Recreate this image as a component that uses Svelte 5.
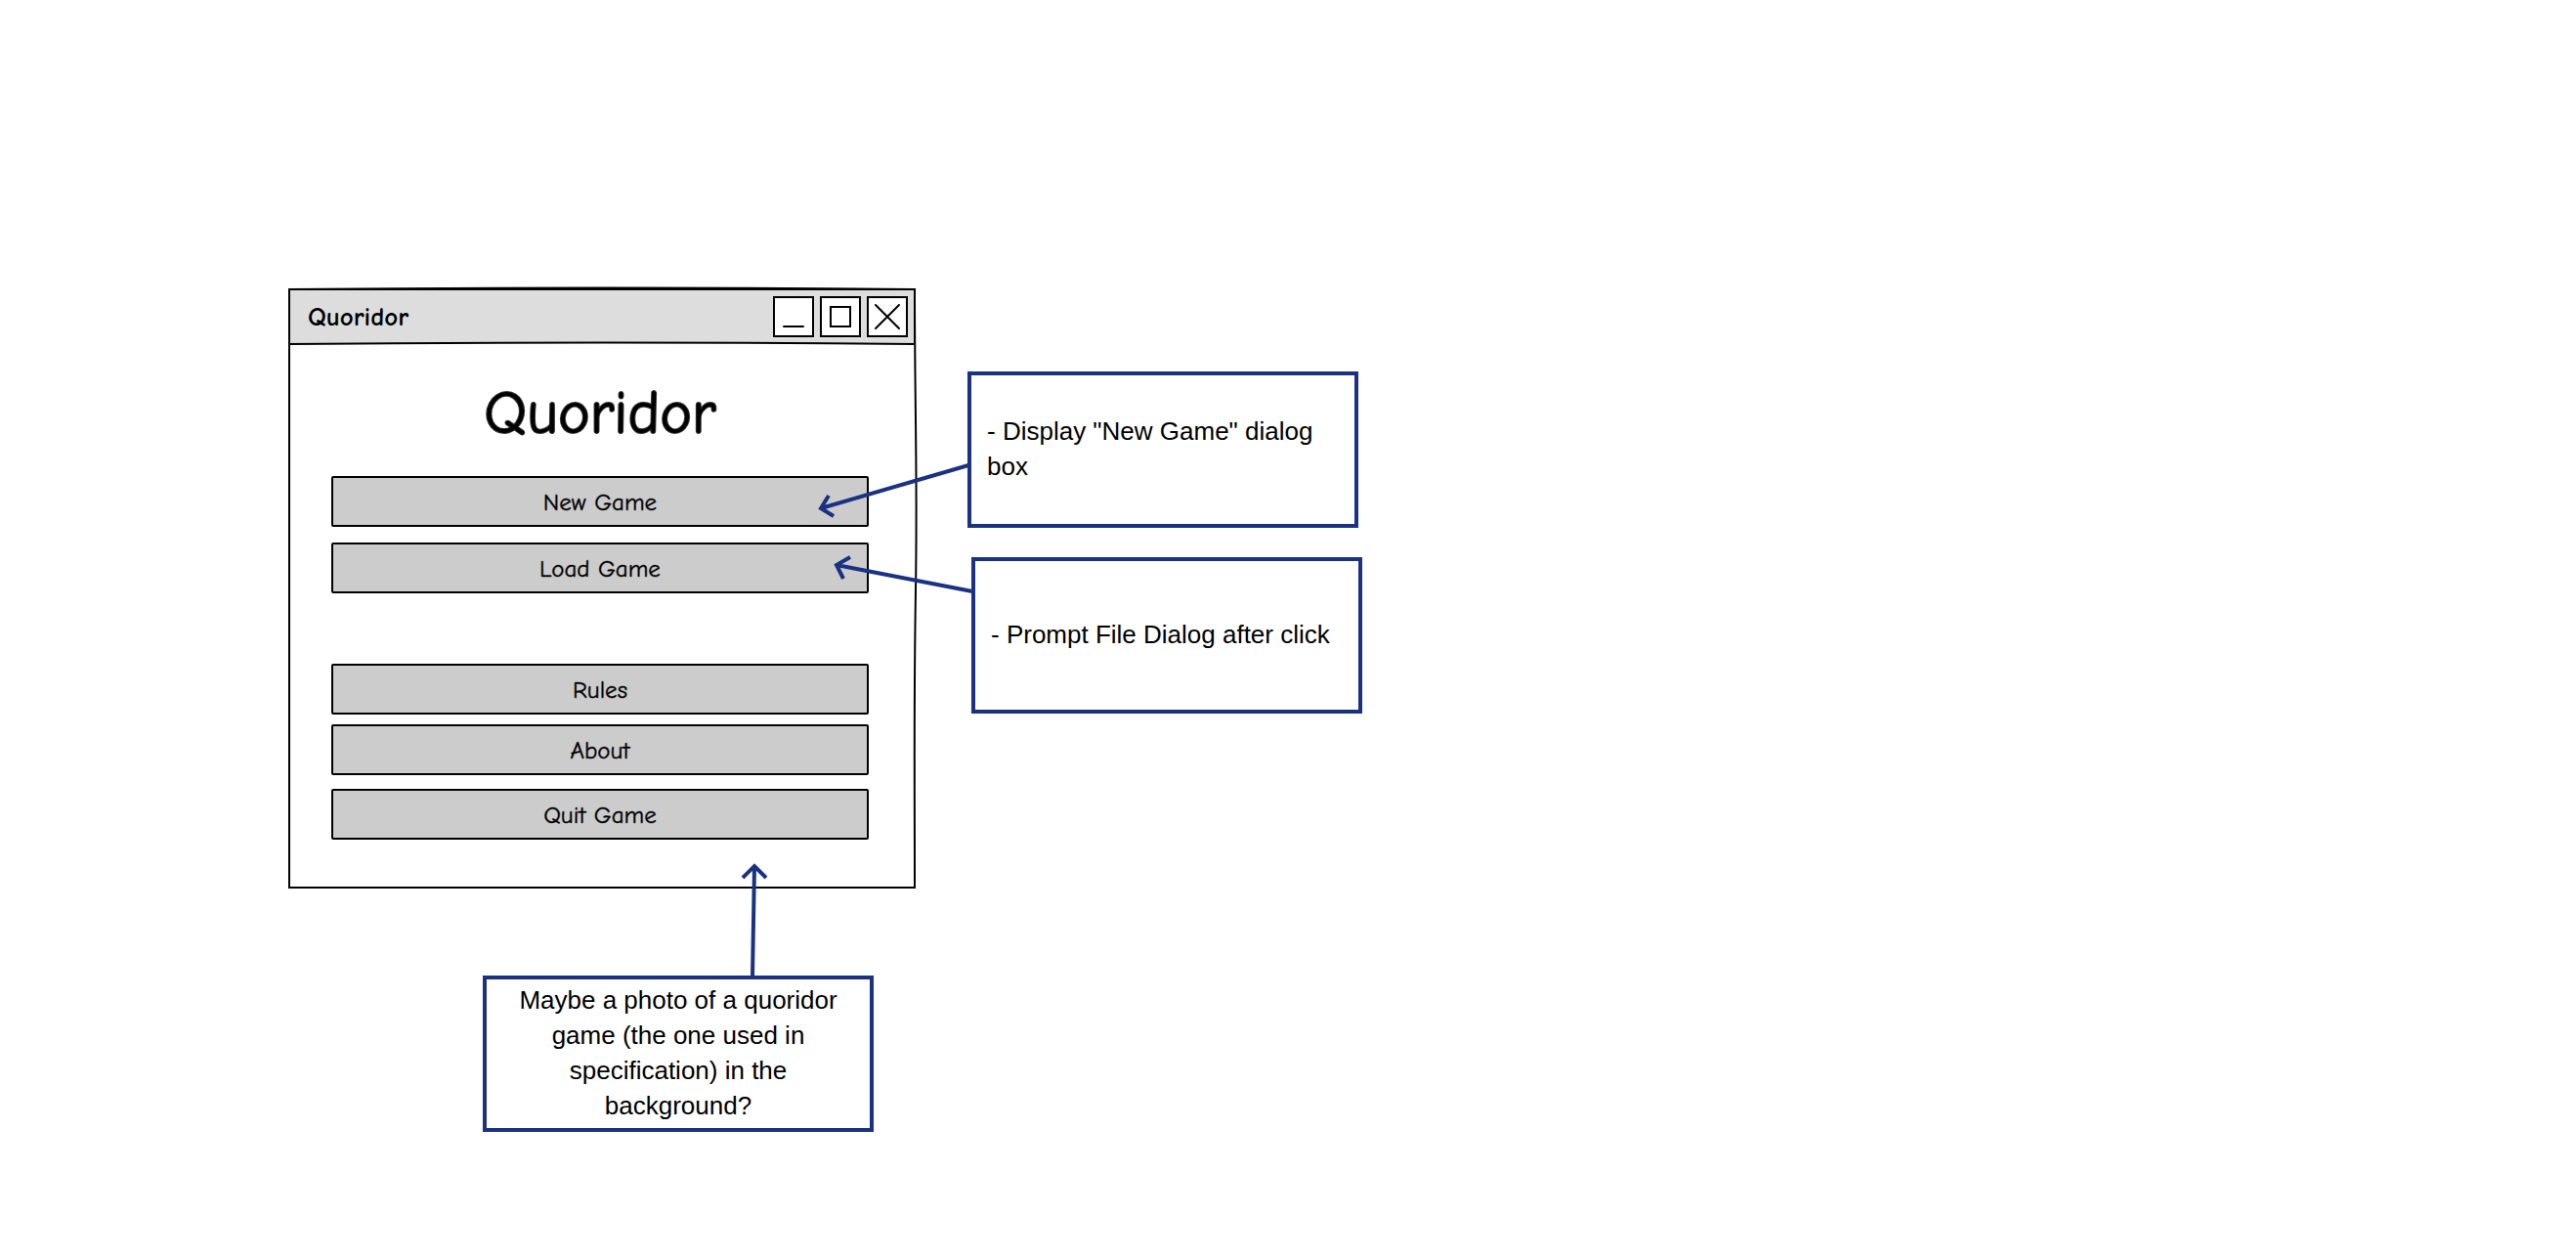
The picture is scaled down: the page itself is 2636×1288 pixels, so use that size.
<script>
  const primary = ['New Game', 'Load Game'];
  const secondary = ['Rules', 'About'];
</script>

<main class="canvas">
  <section class="window" aria-label="Quoridor main menu">
    <svg class="frame" viewBox="0 0 642 614" preserveAspectRatio="none" aria-hidden="true">
      <path d="M1 1 Q320 -2 641 1 V57 Q320 54 1 57 Z" fill="#ddd" stroke="none" />
      <path d="M1 1 H641 V57" />
      <path d="M1 57 Q320 54 641 57" />
      <path d="M1 1 Q320 -2 641 1 C641 120 644 190 642 310 S641 500 641 613 H1 Z" />
    </svg>

    <header class="titlebar">
      <span class="caption">Quoridor</span>
      <div class="controls">
        <button class="control" aria-label="Minimize">
          <svg viewBox="0 0 38 38" aria-hidden="true"><path d="M9 29H29" /></svg>
        </button>
        <button class="control" aria-label="Maximize">
          <svg viewBox="0 0 38 38" aria-hidden="true"><path d="M9 9H29V29H9Z" /></svg>
        </button>
        <button class="control" aria-label="Close">
          <svg viewBox="0 0 38 38" aria-hidden="true"><path d="M7 7L31 31M31 7L7 31" /></svg>
        </button>
      </div>
    </header>

    <div class="content">
      <h1>Quoridor</h1>
      <div class="group primary">
        {#each primary as label}
          <button class="item">{label}</button>
        {/each}
      </div>
      <div class="group secondary">
        {#each secondary as label}
          <button class="item">{label}</button>
        {/each}
      </div>
      <button class="item">Quit Game</button>
    </div>
  </section>

  <aside class="note new-game"><p>- Display "New Game" dialog box</p></aside>
  <aside class="note load-game"><p>- Prompt File Dialog after click</p></aside>
  <aside class="note background"><p>Maybe a photo of a quoridor game (the one used in specification) in the background?</p></aside>

  <svg class="arrows" width="1400" height="1160" viewBox="0 0 1400 1160" aria-hidden="true">
    <path d="M991 476L840 520M848 507L840 520L853 528" />
    <path d="M995 605L856 578M870 570L856 578L863 592" />
    <path d="M770 999L772 886M760 898L772 886L784 898" />
  </svg>
</main>

<style>
  :global(body) {
    margin: 0;
    background: #fff;
  }

  .canvas {
    --hand: "Comic Sans MS", "Comic Neue", Lato, sans-serif;
    --ink: #000;
    --blue: #1a3281;
    position: relative;
    min-height: 100vh;
    overflow: hidden;
    color: var(--ink);
    font-family: "Liberation Sans", Arial, sans-serif;
  }

  button {
    font: inherit;
    color: inherit;
    cursor: pointer;
  }

  .window {
    position: absolute;
    left: 295px;
    top: 295px;
    width: 642px;
    box-sizing: border-box;
    font-family: var(--hand);
  }

  .frame {
    position: absolute;
    inset: 0;
    width: 100%;
    height: 100%;
    overflow: visible;
    fill: none;
    stroke: var(--ink);
    stroke-width: 2;
  }

  .titlebar {
    position: relative;
    display: flex;
    align-items: center;
    justify-content: space-between;
    padding: 8px 8px 8px 20px;
  }

  .caption {
    padding-top: 2px;
    font-size: 27px;
    font-weight: 700;
    line-height: 32px;
  }

  .controls {
    display: flex;
    gap: 6px;
  }

  .control {
    width: 42px;
    height: 42px;
    box-sizing: border-box;
    padding: 0;
    border: 2px solid var(--ink);
    background: #fff;
  }

  .control svg {
    display: block;
    fill: none;
    stroke: var(--ink);
    stroke-width: 2;
    stroke-linecap: round;
  }

  .content {
    position: relative;
    display: flex;
    flex-direction: column;
    padding: 30px 48px 50px 44px;
  }

  h1 {
    margin: 0 0 24px;
    font-size: 62px;
    font-weight: 400;
    line-height: 80px;
    text-align: center;
    -webkit-text-stroke: 2px rgb(0 0 0 / 0.8);
  }

  .group {
    display: flex;
    flex-direction: column;
  }

  .primary {
    gap: 16px;
    margin-bottom: 72px;
  }

  .secondary {
    gap: 10px;
    margin-bottom: 14px;
  }

  .item {
    height: 52px;
    padding: 2px 0 0;
    border: 2px solid var(--ink);
    border-radius: 2px;
    background: #ccc;
    font-size: 25px;
    line-height: 32px;
    -webkit-text-stroke: 1px rgb(0 0 0 / 0.4);
  }

  .note {
    position: absolute;
    display: flex;
    align-items: center;
    width: 400px;
    min-height: 160px;
    box-sizing: border-box;
    padding: 0 16px 2px;
    border: 4px solid var(--blue);
    background: #fff;
    font-size: 26px;
    line-height: 36px;
  }

  .note p {
    margin: 0;
  }

  .new-game {
    left: 990px;
    top: 380px;
  }

  .load-game {
    left: 994px;
    top: 570px;
  }

  .background {
    left: 494px;
    top: 998px;
    text-align: center;
  }

  .arrows {
    position: absolute;
    left: 0;
    top: 0;
    pointer-events: none;
    fill: none;
    stroke: var(--blue);
    stroke-width: 4;
  }
</style>
